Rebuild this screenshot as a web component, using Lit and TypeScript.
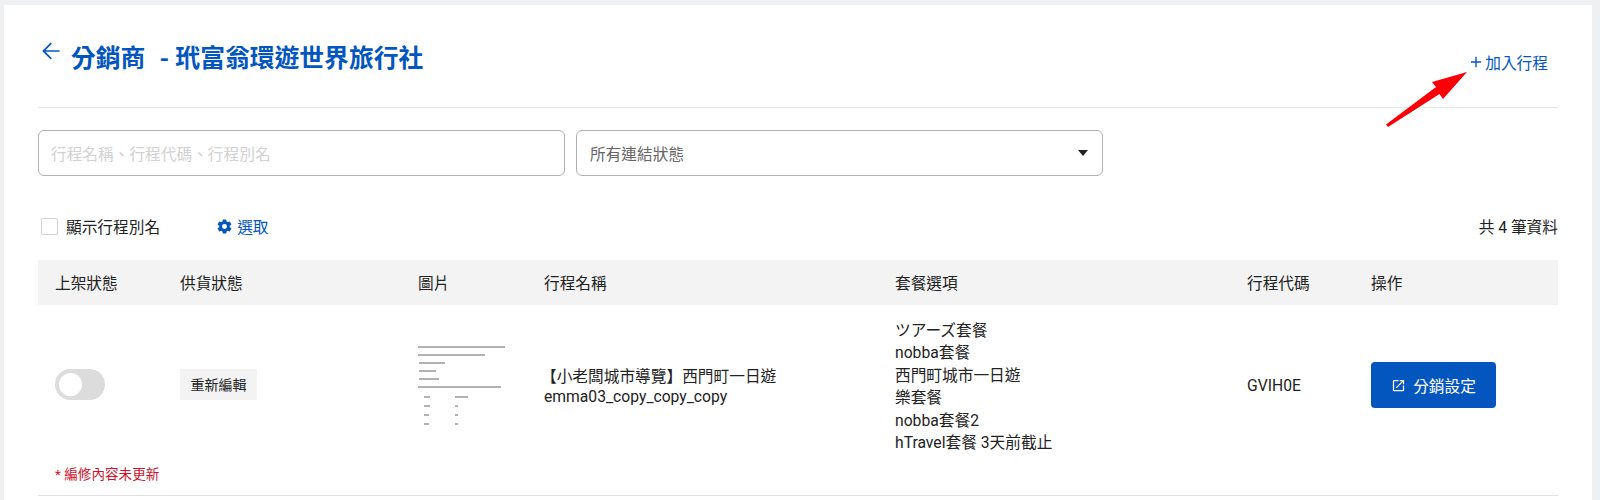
import { LitElement, html, css, svg } from 'lit';
import { customElement } from 'lit/decorators.js';

const packages = ['ツアーズ套餐', 'nobba套餐', '西門町城市一日遊', '樂套餐', 'nobba套餐2', 'hTravel套餐 3天前截止'];

// blurred stand-in for the itinerary photo: [x, y, width]
const thumbLines = [
  [18, 16, 87], [18, 24, 67], [19, 32, 26], [19, 40, 17], [19, 48, 20], [18, 56, 83],
  [24, 66, 6], [55, 66, 13], [24, 75, 6], [55, 75, 3], [24, 84, 5], [55, 84, 3], [24, 93, 5], [55, 93, 3],
];

@customElement('app-root')
export class AppRoot extends LitElement {
  static styles = css`
    :host {
      display: block;
      height: 500px;
      overflow: hidden;
      background: #eff0f2;
      padding: 5px 8px 0 4px;
      box-sizing: border-box;
      color: #222;
      font-family: Roboto, "Noto Sans CJK TC", sans-serif;
      font-size: 15.7px;
    }
    .card {
      position: relative;
      background: #fff;
      height: 495px;
      padding: 0 34px;
    }
    .head {
      display: flex;
      justify-content: space-between;
      height: 102px;
      border-bottom: 1px solid #e5e5e5;
    }
    .title {
      display: flex;
      align-items: flex-start;
      margin: 0;
      padding-top: 36px;
      color: #0456bf;
      font-size: 24.8px;
      line-height: 36px;
      font-weight: 700;
    }
    .back { width: 26px; height: 26px; margin: -3px 7px 0 0; fill: #0456bf; }
    .title .dash { margin-left: 14px; }
    .add {
      display: flex;
      align-items: center;
      gap: 3px;
      height: 22px;
      margin: 46px 10px 0 0;
      color: #0456bf;
      font-size: 15.7px;
    }
    .add svg { width: 12px; height: 12px; stroke: #0456bf; stroke-width: 1.6; }
    .filters {
      display: flex;
      gap: 11px;
      margin-top: 22px;
    }
    .field {
      display: flex;
      align-items: center;
      justify-content: space-between;
      width: 527px;
      height: 46px;
      padding: 0 13px;
      box-sizing: border-box;
      border: 1px solid #b0b0b0;
      border-radius: 6px;
      color: #666;
    }
    .field.search { color: #d2d2d2; padding-left: 12px; }
    .caret {
      width: 0;
      height: 0;
      margin-right: 1px;
      border: 5px solid transparent;
      border-top: 6px solid #222;
      border-bottom: 0;
    }
    .tools {
      display: flex;
      align-items: center;
      height: 24px;
      margin-top: 38px;
    }
    .check {
      width: 17px;
      height: 17px;
      margin-left: 3px;
      box-sizing: border-box;
      border: 1px solid #d4d4d4;
      border-radius: 2px;
    }
    .check-label { margin-left: 8px; }
    .pick {
      display: flex;
      align-items: center;
      gap: 4px;
      margin-left: 56px;
      color: #0456bf;
    }
    .pick svg { width: 17px; height: 17px; fill: #0456bf; }
    .total { margin-left: auto; }
    .cols {
      display: grid;
      grid-template-columns: 125px 238px 126px 351px 352px 124px 1fr;
      padding-left: 17px;
    }
    .thead {
      align-items: center;
      height: 45px;
      margin-top: 22px;
      background: #f3f3f3;
    }
    .row {
      height: 191px;
      padding-top: 15px;
      box-sizing: border-box;
      border-bottom: 1px solid #e0e0e0;
    }
    .tbody { align-items: center; }
    .lifted { margin-bottom: 4px; }
    .toggle {
      position: relative;
      width: 50px;
      height: 31px;
      margin-bottom: 6px;
      border-radius: 16px;
      background: #dcdcdc;
    }
    .toggle::after {
      content: "";
      position: absolute;
      left: 4px;
      top: 4px;
      width: 23px;
      height: 23px;
      border-radius: 50%;
      background: #fff;
    }
    .tag {
      display: flex;
      align-items: center;
      justify-content: center;
      width: 77px;
      height: 31px;
      margin-bottom: 6px;
      background: #f3f3f3;
      font-size: 14px;
    }
    .thumb { display: block; width: 110px; height: 110px; margin-left: -18px; margin-bottom: 2px; }
    .name { line-height: 20.5px; margin-left: -3px; }
    .name div + div { margin-left: 3px; }
    .pkgs { line-height: 22.4px; }
    .action {
      display: flex;
      align-items: center;
      justify-content: center;
      gap: 7px;
      width: 125px;
      height: 46px;
      border-radius: 4px;
      background: #0456bf;
      color: #fff;
    }
    .action svg { width: 15px; height: 15px; fill: #fff; }
    .note {
      margin: 10px 0 0 17px;
      color: #d0112b;
      font-size: 13.6px;
      line-height: 20px;
    }
    .mark {
      position: absolute;
      left: 1379px;
      top: 62px;
      width: 85px;
      height: 60px;
      fill: #fb0007;
    }
  `;

  render() {
    return html`
      <div class="card">
        <div class="head">
          <h1 class="title">
            <svg class="back" viewBox="0 0 24 24"><path d="M20 11.2H6.9l5.9-5.9L11.7 4.2 3.9 12l7.8 7.8 1.1-1.1-5.9-5.9H20z" /></svg>
            <span>分銷商</span><span class="dash">- 玳富翁環遊世界旅行社</span>
          </h1>
          <div class="add">
            <svg viewBox="0 0 14 14"><path d="M7 1v12M1 7h12" fill="none" /></svg>
            加入行程
          </div>
        </div>

        <div class="filters">
          <div class="field search">行程名稱、行程代碼、行程別名</div>
          <div class="field">所有連結狀態<span class="caret"></span></div>
        </div>

        <div class="tools">
          <span class="check"></span>
          <span class="check-label">顯示行程別名</span>
          <span class="pick">
            <svg viewBox="0 0 24 24"><path d="M12 15.5A3.5 3.5 0 1 1 12 8.5a3.5 3.5 0 0 1 0 7zm7.43-2.53a7.8 7.8 0 0 0 0-1.94l2.11-1.65a.5.5 0 0 0 .12-.64l-2-3.46a.5.5 0 0 0-.61-.22l-2.49 1a7.3 7.3 0 0 0-1.69-.98l-.38-2.65A.49.49 0 0 0 14 2h-4a.49.49 0 0 0-.49.42l-.38 2.65a7.7 7.7 0 0 0-1.69.98l-2.49-1a.49.49 0 0 0-.61.22l-2 3.46a.49.49 0 0 0 .12.64l2.11 1.65a7.9 7.9 0 0 0 0 1.94l-2.11 1.65a.5.5 0 0 0-.12.64l2 3.46c.12.22.39.3.61.22l2.49-1c.52.4 1.08.73 1.69.98l.38 2.65c.03.24.24.42.49.42h4c.25 0 .46-.18.49-.42l.38-2.65a7.3 7.3 0 0 0 1.69-.98l2.49 1c.22.08.49 0 .61-.22l2-3.46a.5.5 0 0 0-.12-.64z" /></svg>
            選取
          </span>
          <span class="total">共 4 筆資料</span>
        </div>

        <div class="cols thead">
          <span>上架狀態</span>
          <span>供貨狀態</span>
          <span>圖片</span>
          <span>行程名稱</span>
          <span>套餐選項</span>
          <span>行程代碼</span>
          <span>操作</span>
        </div>

        <div class="row">
          <div class="cols tbody">
            <div class="toggle"></div>
            <div class="tag">重新編輯</div>
            <svg class="thumb" viewBox="0 0 110 110">
              <defs><filter id="soft" x="-5%" y="-5%" width="110%" height="110%"><feGaussianBlur stdDeviation="0.7" /></filter></defs>
              <g filter="url(#soft)" fill="#a0a0a0">
                ${thumbLines.map(([x, y, w]) => svg`<rect x=${x} y=${y - 0.8} width=${w} height="1.6" />`)}
              </g>
            </svg>
            <div class="name">
              <div>【小老闆城市導覽】西門町一日遊</div>
              <div>emma03_copy_copy_copy</div>
            </div>
            <div class="pkgs">
              ${packages.map((p) => html`<div>${p}</div>`)}
            </div>
            <div class="lifted">GVIH0E</div>
            <div class="action lifted">
              <svg viewBox="0 0 24 24"><path d="M19 19H5V5h7V3H5a2 2 0 0 0-2 2v14a2 2 0 0 0 2 2h14a2 2 0 0 0 2-2v-7h-2zM14 3v2h3.6l-9.8 9.8 1.4 1.4L19 6.4V10h2V3z" /></svg>
              分銷設定
            </div>
          </div>
          <div class="note">* 編修內容未更新</div>
        </div>

        <svg class="mark" viewBox="0 0 85 60"><polygon points="3,57.5 53,20 49,15 84,5 60,32 56.5,27 5,60" /></svg>
      </div>
    `;
  }
}
